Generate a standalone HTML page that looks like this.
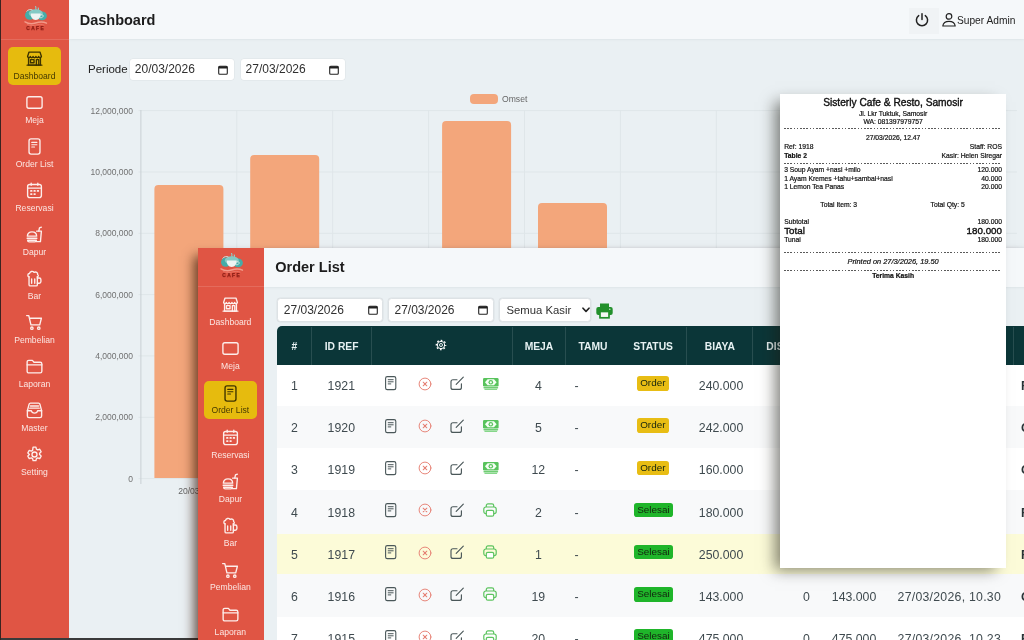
<!DOCTYPE html><html><head><meta charset="utf-8"><title>Sisterly Cafe</title><style>
*{box-sizing:border-box}
html,body{margin:0;padding:0}
#root{position:absolute;left:0;top:0;width:1024px;height:640px;overflow:hidden;will-change:transform}
body{width:1024px;height:640px;overflow:hidden;position:relative;background:#eaf0f3;font-family:"Liberation Sans",sans-serif;color:#222}
.win{position:absolute;background:#eaf0f3;z-index:0}
#w2{z-index:1}
.sb{position:absolute;left:0;top:0;bottom:0;width:68px;background:#e05544;color:#fdeeeb;z-index:2}
.logo{position:absolute;left:0;top:0;height:39.500px;border-bottom:1px solid rgba(255,255,255,.13)}
.it{position:absolute;left:8px;width:53px;height:38px;border-radius:5px;text-align:center;font-size:8.600px;line-height:10px}
.it svg{display:block;margin:2.100px auto 2.900px}
.it span{display:block;white-space:nowrap;opacity:.95}
.it.act{background:#e6bb0e;color:#3d3300}
.hd{position:absolute;left:68.700px;right:0;top:0;height:39.300px;background:#f5f8fa;box-shadow:0 0 2.500px rgba(120,140,150,.2)}
.hd h1{position:absolute;left:11px;top:0;margin:0;font-size:14.500px;line-height:40px;font-weight:bold;color:#1c1c1c}
.inp{position:absolute;height:22px;background:#fff;border-radius:3px;font-size:12px;line-height:22px;padding-left:5px;color:#303030;box-shadow:0 0 0 .5px rgba(0,0,0,.06)}

.inp.f{top:50.700px;height:23.200px;line-height:22.400px;border:1px solid #dde2e5;border-radius:3.500px;padding-left:5.500px}
#w2 .hd{left:66.200px;height:38.800px}
#w2 .hd h1{top:-1px}
.th{position:absolute;z-index:2;top:79px;height:38px;line-height:40px;color:#e6f1f2;font-size:10.300px;font-weight:bold;text-align:center;border-left:1px solid rgba(255,255,255,.12)}
.th:first-of-type{border-left:none}
.tr{position:absolute;left:79px;width:760px;height:42.200px;font-size:12.300px;color:#3f4a4f}
.tr span{position:absolute;top:1.400px;line-height:42.200px;text-align:center}
.tr i{position:absolute;top:13px;display:block;line-height:0}
.tr b{position:absolute;top:12.500px;font-weight:normal;font-size:9.900px;line-height:14.500px;height:14.500px;padding:0 3.300px;border-radius:2.800px;color:#14240f}

#rc{z-index:2;position:absolute;left:780px;top:93.700px;width:225.800px;height:474.500px;background:#fff;box-shadow:-8px 5px 14px -3px rgba(30,30,20,.55);color:#111;font-size:6.750px}
#rc .l{position:absolute;left:4.200px;right:3.800px;text-align:center;line-height:12px;white-space:nowrap;-webkit-text-stroke:.2px #111}
#rc .ttl{font-size:10.200px;-webkit-text-stroke:.38px #111}
#rc .big{font-size:9.800px;-webkit-text-stroke:.38px #111}
#rc .dash{position:absolute;left:4.200px;right:3.800px;height:.8px;background:repeating-linear-gradient(90deg,#5a5a5a 0,#5a5a5a 1.700px,transparent 1.700px,transparent 3.200px)}
</style></head><body><div id="root"><div class="win" style="left:0;top:0;width:1024px;height:640px"><svg style="position:absolute;left:0;top:0" width="1024" height="640" viewBox="0 0 1024 640"><path d="M138.500 478.6H1017" stroke="#dfe6e9" stroke-width="1"/><path d="M138.500 417.3H1017" stroke="#dfe6e9" stroke-width="1"/><path d="M138.500 355.9H1017" stroke="#dfe6e9" stroke-width="1"/><path d="M138.500 294.6H1017" stroke="#dfe6e9" stroke-width="1"/><path d="M138.500 233.3H1017" stroke="#dfe6e9" stroke-width="1"/><path d="M138.500 172.0H1017" stroke="#dfe6e9" stroke-width="1"/><path d="M138.500 110.6H1017" stroke="#dfe6e9" stroke-width="1"/><path d="M140.9 110V484" stroke="#c9d0d4" stroke-width="1"/><path d="M236.8 110V484" stroke="#dfe6e9" stroke-width="1"/><path d="M332.7 110V484" stroke="#dfe6e9" stroke-width="1"/><path d="M428.6 110V484" stroke="#dfe6e9" stroke-width="1"/><path d="M524.5 110V484" stroke="#dfe6e9" stroke-width="1"/><path d="M620.4 110V484" stroke="#dfe6e9" stroke-width="1"/><path d="M716.3 110V484" stroke="#dfe6e9" stroke-width="1"/><path d="M812.2 110V484" stroke="#dfe6e9" stroke-width="1"/><path d="M908.1 110V484" stroke="#dfe6e9" stroke-width="1"/><path d="M1004.0 110V484" stroke="#dfe6e9" stroke-width="1"/><text x="133" y="481.7" text-anchor="end" font-size="8.500" fill="#707070">0</text><text x="133" y="420.4" text-anchor="end" font-size="8.500" fill="#707070">2,000,000</text><text x="133" y="359.0" text-anchor="end" font-size="8.500" fill="#707070">4,000,000</text><text x="133" y="297.7" text-anchor="end" font-size="8.500" fill="#707070">6,000,000</text><text x="133" y="236.4" text-anchor="end" font-size="8.500" fill="#707070">8,000,000</text><text x="133" y="175.1" text-anchor="end" font-size="8.500" fill="#707070">10,000,000</text><text x="133" y="113.7" text-anchor="end" font-size="8.500" fill="#707070">12,000,000</text><path d="M154.4 478V189q0-4 4-4H219.4q4 0 4 4V478z" fill="#f3a67b"/><path d="M250.2 478V159q0-4 4-4H315.2q4 0 4 4V478z" fill="#f3a67b"/><path d="M346.2 478V304q0-4 4-4H411.2q4 0 4 4V478z" fill="#f3a67b"/><path d="M442.1 478V125q0-4 4-4H507.1q4 0 4 4V478z" fill="#f3a67b"/><path d="M538.0 478V207q0-4 4-4H603.0q4 0 4 4V478z" fill="#f3a67b"/><text x="188.9" y="494" text-anchor="middle" font-size="8.600" fill="#666">20/03</text><text x="284.8" y="494" text-anchor="middle" font-size="8.600" fill="#666">21/03</text><text x="380.7" y="494" text-anchor="middle" font-size="8.600" fill="#666">22/03</text><text x="476.6" y="494" text-anchor="middle" font-size="8.600" fill="#666">23/03</text><text x="572.5" y="494" text-anchor="middle" font-size="8.600" fill="#666">24/03</text><text x="668.4" y="494" text-anchor="middle" font-size="8.600" fill="#666">25/03</text><text x="764.3" y="494" text-anchor="middle" font-size="8.600" fill="#666">26/03</text><text x="860.2" y="494" text-anchor="middle" font-size="8.600" fill="#666">27/03</text><rect x="470" y="94" width="28" height="10" rx="4" fill="#f3a67b"/><text x="502" y="102" font-size="8.600" fill="#666">Omset</text></svg><div class="sb" style="width:68.7px"><div class="logo" style="width:68.7px"><div style="position:absolute;left:14px;top:2px;line-height:0"><svg width="40" height="40" viewBox="0 0 40 40"><path d="M21.500 4.500c1.200 1-.5 2.200.8 3.600M24.200 6c.8.800-.3 1.600.5 2.600" stroke="#8fcfca" stroke-width="1.100" fill="none" stroke-linecap="round"/><ellipse cx="15.800" cy="13.200" rx="4.800" ry="4.600" fill="#45aca8"/><ellipse cx="28" cy="13.800" rx="4.900" ry="4.400" fill="#45aca8"/><ellipse cx="21.800" cy="11.400" rx="7" ry="4.200" fill="#84cac5"/><path d="M16.800 11.600h9.800c.3 3.600-1.600 6.400-4.900 6.400s-5.200-2.800-4.900-6.400z" fill="#eef4f3"/><path d="M26.600 12.800c2-.6 3 .6 2.400 1.800c-.5 1-1.800 1.300-3 1.100" stroke="#d8ebe9" stroke-width=".9" fill="none"/><path d="M12.500 9.500c1.500-2 4-2.500 6-1.500" stroke="#cfe9e6" stroke-width=".9" fill="none"/><path d="M11 19.800c3.500 2.200 7 2.400 10.500 1.200c3.500-1.200 7.500-1.600 11 .2" stroke="#f29a8a" stroke-width="1.400" fill="none" stroke-linecap="round"/><path d="M13.500 22.600c3 1.300 6 1.200 8.500.4c2.600-.8 5.500-1 8 .1" stroke="#ea7464" stroke-width="1" fill="none" stroke-linecap="round"/><text x="21.700" y="28.400" text-anchor="middle" font-family="Liberation Sans, sans-serif" font-size="4.800" font-weight="bold" fill="#8a1c14" stroke="#8a1c14" stroke-width=".25" letter-spacing="1.400">CAFE</text></svg></div></div><div class="it act" style="left:8px;top:46.8px"><svg width="19" height="19" viewBox="0 0 16 16" fill="none" stroke="currentColor" stroke-width="1.15" stroke-linecap="round" stroke-linejoin="round" ><path d="M2.2 6.2 L3.4 2.6 H12.6 L13.8 6.2"/><path d="M2.2 6.2c0 1.6 2.3 1.6 2.3 0c0 1.6 2.3 1.6 2.3 0c0 1.6 2.4 1.6 2.4 0c0 1.6 2.3 1.6 2.3 0c0 1.6 2.3 1.6 2.3 0"/><path d="M3 7.6V13.6H13V7.6"/><path d="M1.8 13.6H14.2"/><rect x="4.6" y="9" width="3" height="2.6"/><path d="M9.6 13.6V9H11.6V13.6"/></svg><span>Dashboard</span></div><div class="it" style="left:8px;top:90.8px"><svg width="19" height="19" viewBox="0 0 16 16" fill="none" stroke="currentColor" stroke-width="1.15" stroke-linecap="round" stroke-linejoin="round" ><rect x="1.6" y="3.2" width="12.8" height="9.6" rx="1.6"/></svg><span>Meja</span></div><div class="it" style="left:8px;top:134.9px"><svg width="19" height="19" viewBox="0 0 16 16" fill="none" stroke="currentColor" stroke-width="1.15" stroke-linecap="round" stroke-linejoin="round" ><rect x="3.4" y="1.6" width="9.2" height="12.8" rx="1.7"/><path d="M5.7 4.6H10M5.7 6.5H10M5.7 8.4H8" stroke-width="1"/></svg><span>Order List</span></div><div class="it" style="left:8px;top:178.9px"><svg width="19" height="19" viewBox="0 0 16 16" fill="none" stroke="currentColor" stroke-width="1.15" stroke-linecap="round" stroke-linejoin="round" ><rect x="2.2" y="2.9" width="11.6" height="11.1" rx="1.8"/><path d="M2.2 6H13.8M5.2 1.8V3.6M10.8 1.8V3.6"/><path d="M5 8.4H5.6M7.8 8.4H8.4M10.6 8.4H11.2M5 11H5.6M7.8 11H8.4" stroke-width="1.5"/></svg><span>Reservasi</span></div><div class="it" style="left:8px;top:223.0px"><svg width="19" height="19" viewBox="0 0 16 16" fill="none" stroke="currentColor" stroke-width="1.15" stroke-linecap="round" stroke-linejoin="round" ><path d="M9.8 5.2H13.8L13 14H9.6"/><path d="M11.6 5.2L12.2 2.4L13.8 1.8"/><path d="M2 9.4c0-2.4 1.6-3.6 3.9-3.6s3.9 1.2 3.9 3.6z"/><path d="M1.8 11.2H10"/><path d="M2.2 12.8H9.6c0 1-.6 1.4-1.4 1.4H3.6c-.8 0-1.4-.4-1.4-1.4z"/></svg><span>Dapur</span></div><div class="it" style="left:8px;top:267.0px"><svg width="19" height="19" viewBox="0 0 16 16" fill="none" stroke="currentColor" stroke-width="1.15" stroke-linecap="round" stroke-linejoin="round" ><path d="M3.4 6.4V13.2c0 .6.4 1 1 1H9.4c.6 0 1-.4 1-1V6.4"/><path d="M10.4 7.6H12c.8 0 1.4.6 1.4 1.4V10.6c0 .8-.6 1.4-1.4 1.4H10.4"/><path d="M3.4 6.6C2 6.2 2 3.8 3.8 3.8C4 2 6.6 1.4 7.6 2.8C9.2 2 11 3 10.6 4.6C11.6 5.2 11.2 6.6 10.4 6.6"/><path d="M5.6 8.4V12M8.2 8.4V12"/></svg><span>Bar</span></div><div class="it" style="left:8px;top:311.0px"><svg width="19" height="19" viewBox="0 0 16 16" fill="none" stroke="currentColor" stroke-width="1.15" stroke-linecap="round" stroke-linejoin="round" ><path d="M1.4 2.2H3.2L5 10H12.4L13.8 4.4H4"/><circle cx="5.8" cy="12.8" r="1"/><circle cx="11.6" cy="12.8" r="1"/></svg><span>Pembelian</span></div><div class="it" style="left:8px;top:355.1px"><svg width="19" height="19" viewBox="0 0 16 16" fill="none" stroke="currentColor" stroke-width="1.15" stroke-linecap="round" stroke-linejoin="round" ><path d="M1.8 4.2c0-.8.6-1.4 1.4-1.4H6.2L7.6 4.4H12.8c.8 0 1.4.6 1.4 1.4V12c0 .8-.6 1.4-1.4 1.4H3.2c-.8 0-1.4-.6-1.4-1.4z"/><path d="M1.8 6.6H14.2"/></svg><span>Laporan</span></div><div class="it" style="left:8px;top:399.1px"><svg width="19" height="19" viewBox="0 0 16 16" fill="none" stroke="currentColor" stroke-width="1.15" stroke-linecap="round" stroke-linejoin="round" ><path d="M2 8.2L3.4 2.8c.2-.6.6-1 1.2-1H11.400c.6 0 1 .4 1.200 1L14 8.200V12.600c0 .8-.6 1.400-1.400 1.400H3.400C2.600 14 2 13.400 2 12.600z"/><path d="M2 8.200H5.400c.2 1.200 1.200 2 2.600 2s2.400-.8 2.600-2H14"/><path d="M4.600 4.200H11.400M4 6H12"/></svg><span>Master</span></div><div class="it" style="left:8px;top:443.2px"><svg width="19" height="19" viewBox="0 0 16 16" fill="none" stroke="currentColor" stroke-width="1.15" stroke-linecap="round" stroke-linejoin="round" ><circle cx="8" cy="8" r="2.1"/><path d="M6.800 1.800h2.400l.4 1.700 1.100.6 1.700-.5 1.200 2.100-1.300 1.200v1.200l1.300 1.200-1.200 2.100-1.700-.5-1.100.6-.4 1.700H6.800l-.4-1.700-1.100-.6-1.700.5-1.200-2.100 1.300-1.200V7.900L2.400 6.700l1.200-2.100 1.700.5 1.100-.6z"/></svg><span>Setting</span></div></div><div class="hd"><h1>Dashboard</h1><div style="position:absolute;left:840.600px;top:8px;width:29.400px;height:25.500px;background:#f0f3f5"></div><svg style="position:absolute;left:845px;top:12px" width="16" height="16" viewBox="0 0 16 16" fill="none" stroke="#222" stroke-width="1.500" stroke-linecap="round"><path d="M8 1.800V7.600"/><path d="M4.700 3.600a5.600 5.600 0 1 0 6.600 0"/></svg><svg style="position:absolute;left:872px;top:12px" width="16" height="16" viewBox="0 0 16 16" fill="none" stroke="#222" stroke-width="1.200" stroke-linecap="round" stroke-linejoin="round"><circle cx="8" cy="4.400" r="2.800"/><path d="M1.800 14c.4-3 2.800-4.600 6.200-4.600s5.800 1.600 6.200 4.600z"/></svg><div style="position:absolute;left:888.300px;top:.8px;line-height:40px;font-size:10.200px;color:#222">Super Admin</div></div><div style="position:absolute;left:88px;top:58px;line-height:22px;font-size:11.500px;color:#222">Periode</div><div class="inp" style="left:129.800px;top:58.700px;width:104.500px;height:21.500px;line-height:21.500px">20/03/2026<svg style="position:absolute;left:88px;top:6px" width="10" height="10" viewBox="0 0 10 10"><rect x=".7" y="1.300" width="8.600" height="8" rx="1" fill="none" stroke="#222" stroke-width="1.100"/><rect x=".7" y="1.300" width="8.600" height="2.200" fill="#222"/></svg></div><div class="inp" style="left:240.600px;top:58.700px;width:104.200px;height:21.500px;line-height:21.500px">27/03/2026<svg style="position:absolute;left:88px;top:6px" width="10" height="10" viewBox="0 0 10 10"><rect x=".7" y="1.300" width="8.600" height="8" rx="1" fill="none" stroke="#222" stroke-width="1.100"/><rect x=".7" y="1.300" width="8.600" height="2.200" fill="#222"/></svg></div></div><div class="win" id="w2" style="left:198.300px;top:247.800px;width:830px;height:400px;box-shadow:-5px 7px 11px -1px rgba(50,20,5,.72)"><div class="sb" style="width:66.2px"><div class="logo" style="width:66.2px"><div style="position:absolute;left:11.6px;top:1.4px;line-height:0"><svg width="40" height="40" viewBox="0 0 40 40"><path d="M21.500 4.500c1.200 1-.5 2.200.8 3.600M24.200 6c.8.800-.3 1.600.5 2.600" stroke="#8fcfca" stroke-width="1.100" fill="none" stroke-linecap="round"/><ellipse cx="15.800" cy="13.200" rx="4.800" ry="4.600" fill="#45aca8"/><ellipse cx="28" cy="13.800" rx="4.900" ry="4.400" fill="#45aca8"/><ellipse cx="21.800" cy="11.400" rx="7" ry="4.200" fill="#84cac5"/><path d="M16.800 11.600h9.800c.3 3.600-1.600 6.400-4.900 6.400s-5.200-2.800-4.900-6.400z" fill="#eef4f3"/><path d="M26.600 12.800c2-.6 3 .6 2.400 1.800c-.5 1-1.800 1.300-3 1.100" stroke="#d8ebe9" stroke-width=".9" fill="none"/><path d="M12.500 9.500c1.500-2 4-2.500 6-1.500" stroke="#cfe9e6" stroke-width=".9" fill="none"/><path d="M11 19.800c3.500 2.200 7 2.400 10.500 1.200c3.500-1.200 7.500-1.600 11 .2" stroke="#f29a8a" stroke-width="1.400" fill="none" stroke-linecap="round"/><path d="M13.500 22.600c3 1.300 6 1.200 8.500.4c2.600-.8 5.500-1 8 .1" stroke="#ea7464" stroke-width="1" fill="none" stroke-linecap="round"/><text x="21.700" y="28.400" text-anchor="middle" font-family="Liberation Sans, sans-serif" font-size="4.800" font-weight="bold" fill="#8a1c14" stroke="#8a1c14" stroke-width=".25" letter-spacing="1.400">CAFE</text></svg></div></div><div class="it" style="left:5.6px;top:45.2px"><svg width="19" height="19" viewBox="0 0 16 16" fill="none" stroke="currentColor" stroke-width="1.15" stroke-linecap="round" stroke-linejoin="round" ><path d="M2.2 6.2 L3.4 2.6 H12.6 L13.8 6.2"/><path d="M2.2 6.2c0 1.6 2.3 1.6 2.3 0c0 1.6 2.3 1.6 2.3 0c0 1.6 2.4 1.6 2.4 0c0 1.6 2.3 1.6 2.3 0c0 1.6 2.3 1.6 2.3 0"/><path d="M3 7.6V13.6H13V7.6"/><path d="M1.8 13.6H14.2"/><rect x="4.6" y="9" width="3" height="2.6"/><path d="M9.6 13.6V9H11.6V13.6"/></svg><span>Dashboard</span></div><div class="it" style="left:5.6px;top:89.5px"><svg width="19" height="19" viewBox="0 0 16 16" fill="none" stroke="currentColor" stroke-width="1.15" stroke-linecap="round" stroke-linejoin="round" ><rect x="1.6" y="3.2" width="12.8" height="9.6" rx="1.6"/></svg><span>Meja</span></div><div class="it act" style="left:5.6px;top:133.7px"><svg width="19" height="19" viewBox="0 0 16 16" fill="none" stroke="currentColor" stroke-width="1.15" stroke-linecap="round" stroke-linejoin="round" ><rect x="3.4" y="1.6" width="9.2" height="12.8" rx="1.7"/><path d="M5.7 4.6H10M5.7 6.5H10M5.7 8.4H8" stroke-width="1"/></svg><span>Order List</span></div><div class="it" style="left:5.6px;top:177.9px"><svg width="19" height="19" viewBox="0 0 16 16" fill="none" stroke="currentColor" stroke-width="1.15" stroke-linecap="round" stroke-linejoin="round" ><rect x="2.2" y="2.9" width="11.6" height="11.1" rx="1.8"/><path d="M2.2 6H13.8M5.2 1.8V3.6M10.8 1.8V3.6"/><path d="M5 8.4H5.6M7.8 8.4H8.4M10.6 8.4H11.2M5 11H5.6M7.8 11H8.4" stroke-width="1.5"/></svg><span>Reservasi</span></div><div class="it" style="left:5.6px;top:222.2px"><svg width="19" height="19" viewBox="0 0 16 16" fill="none" stroke="currentColor" stroke-width="1.15" stroke-linecap="round" stroke-linejoin="round" ><path d="M9.8 5.2H13.8L13 14H9.6"/><path d="M11.6 5.2L12.2 2.4L13.8 1.8"/><path d="M2 9.4c0-2.4 1.6-3.6 3.9-3.6s3.9 1.2 3.9 3.6z"/><path d="M1.8 11.2H10"/><path d="M2.2 12.8H9.6c0 1-.6 1.4-1.4 1.4H3.6c-.8 0-1.4-.4-1.4-1.4z"/></svg><span>Dapur</span></div><div class="it" style="left:5.6px;top:266.4px"><svg width="19" height="19" viewBox="0 0 16 16" fill="none" stroke="currentColor" stroke-width="1.15" stroke-linecap="round" stroke-linejoin="round" ><path d="M3.4 6.4V13.2c0 .6.4 1 1 1H9.4c.6 0 1-.4 1-1V6.4"/><path d="M10.4 7.6H12c.8 0 1.4.6 1.4 1.4V10.6c0 .8-.6 1.4-1.4 1.4H10.4"/><path d="M3.4 6.6C2 6.2 2 3.8 3.8 3.8C4 2 6.6 1.4 7.6 2.8C9.2 2 11 3 10.6 4.6C11.6 5.2 11.2 6.6 10.4 6.6"/><path d="M5.6 8.4V12M8.2 8.4V12"/></svg><span>Bar</span></div><div class="it" style="left:5.6px;top:310.7px"><svg width="19" height="19" viewBox="0 0 16 16" fill="none" stroke="currentColor" stroke-width="1.15" stroke-linecap="round" stroke-linejoin="round" ><path d="M1.4 2.2H3.2L5 10H12.4L13.8 4.4H4"/><circle cx="5.8" cy="12.8" r="1"/><circle cx="11.6" cy="12.8" r="1"/></svg><span>Pembelian</span></div><div class="it" style="left:5.6px;top:354.9px"><svg width="19" height="19" viewBox="0 0 16 16" fill="none" stroke="currentColor" stroke-width="1.15" stroke-linecap="round" stroke-linejoin="round" ><path d="M1.8 4.2c0-.8.6-1.4 1.4-1.4H6.2L7.6 4.4H12.8c.8 0 1.4.6 1.4 1.4V12c0 .8-.6 1.4-1.4 1.4H3.2c-.8 0-1.4-.6-1.4-1.4z"/><path d="M1.8 6.6H14.2"/></svg><span>Laporan</span></div><div class="it" style="left:5.6px;top:399.2px"><svg width="19" height="19" viewBox="0 0 16 16" fill="none" stroke="currentColor" stroke-width="1.15" stroke-linecap="round" stroke-linejoin="round" ><path d="M2 8.2L3.4 2.8c.2-.6.6-1 1.2-1H11.400c.6 0 1 .4 1.200 1L14 8.200V12.600c0 .8-.6 1.400-1.400 1.400H3.400C2.600 14 2 13.400 2 12.600z"/><path d="M2 8.200H5.400c.2 1.200 1.200 2 2.600 2s2.400-.8 2.600-2H14"/><path d="M4.600 4.200H11.400M4 6H12"/></svg><span>Master</span></div><div class="it" style="left:5.6px;top:443.4px"><svg width="19" height="19" viewBox="0 0 16 16" fill="none" stroke="currentColor" stroke-width="1.15" stroke-linecap="round" stroke-linejoin="round" ><circle cx="8" cy="8" r="2.1"/><path d="M6.800 1.800h2.400l.4 1.700 1.100.6 1.700-.5 1.200 2.100-1.300 1.200v1.200l1.300 1.200-1.200 2.100-1.700-.5-1.100.6-.4 1.700H6.800l-.4-1.700-1.100-.6-1.700.5-1.200-2.100 1.300-1.200V7.900L2.400 6.700l1.200-2.100 1.700.5 1.100-.6z"/></svg><span>Setting</span></div></div><div class="hd"><h1 style="left:10.800px">Order List</h1></div><div class="inp f" style="left:79px;width:106.200px">27/03/2026<svg style="position:absolute;left:89.5px;top:5.3px" width="10" height="10" viewBox="0 0 10 10"><rect x=".7" y="1.300" width="8.600" height="8" rx="1" fill="none" stroke="#222" stroke-width="1.100"/><rect x=".7" y="1.300" width="8.600" height="2.200" fill="#222"/></svg></div><div class="inp f" style="left:189.700px;width:106.200px">27/03/2026<svg style="position:absolute;left:89.5px;top:5.3px" width="10" height="10" viewBox="0 0 10 10"><rect x=".7" y="1.300" width="8.600" height="8" rx="1" fill="none" stroke="#222" stroke-width="1.100"/><rect x=".7" y="1.300" width="8.600" height="2.200" fill="#222"/></svg></div><div class="inp f" style="left:300.700px;width:92.300px;padding-left:6.500px;font-size:11.300px">Semua Kasir<svg style="position:absolute;left:82.500px;top:8px" width="8" height="6" viewBox="0 0 8 6" fill="none" stroke="#222" stroke-width="1.600" stroke-linecap="round" stroke-linejoin="round"><path d="M1 1.200L4 4.400L7 1.200"/></svg></div><svg style="position:absolute;left:397.600px;top:55.600px" width="17" height="16" viewBox="0 0 17 16"><path d="M4 .5h9v4H4z" fill="#22902b"/><rect x=".3" y="4" width="16.400" height="8" rx="2" fill="#22902b"/><rect x="4" y="8.500" width="9" height="6.300" fill="#f4f8f4" stroke="#22902b" stroke-width="1.700"/><circle cx="13.800" cy="6.300" r=".7" fill="#d8f0d8"/></svg><div style="position:absolute;left:79px;top:78.500px;width:760px;height:38.300px;background:#0b3638;border-radius:5px 0 0 0;z-index:1"></div><div class="th" style="left:79px;width:34px;border-left:none">#</div><div class="th" style="left:113px;width:59.7px">ID REF</div><div class="th" style="left:172.7px;width:140.7px"></div><div class="th" style="left:313.4px;width:53.6px">MEJA</div><div class="th" style="left:367px;width:54.5px">TAMU</div><div class="th" style="left:421.5px;width:66.7px;border-left:none">STATUS</div><div class="th" style="left:488.2px;width:65.8px">BIAYA</div><div class="th" style="left:554px;width:67.2px">DISKON</div><div class="th" style="left:621.2px;width:66.5px">TOTAL</div><div class="th" style="left:687.7px;width:127px">WAKTU</div><div class="th" style="left:814.7px;width:60px">KASIR</div><svg style="position:absolute;z-index:3;left:236.600px;top:91.300px" width="12" height="12" viewBox="0 0 12 12" fill="none" stroke="#fff"><circle cx="6" cy="6" r="3.700" stroke-width="1"/><circle cx="6" cy="6" r="4.700" stroke-width="1.300" stroke-dasharray="1.700 1.990" stroke-dashoffset=".85"/><circle cx="6" cy="6" r="1.500" stroke-width=".9"/></svg><div class="tr" style="top:115.9px;background:#fff"><span style="left:0;width:34px">1</span><span style="left:34px;width:60px">1921</span><i style="left:108px;top:12.800px"><svg width="12" height="15" viewBox="0 0 12 15" fill="none" stroke="#4a5759" stroke-width="1.1" stroke-linecap="round"><rect x=".6" y=".6" width="10.2" height="13" rx="1.7"/><path d="M3.200 3.700H8.200M3.200 5.800H8.200M3.200 7.900H5.800" stroke-width="1"/></svg></i><i style="left:140.400px;top:13.100px"><svg width="14" height="14" viewBox="0 0 14 14" fill="none" stroke="#e67f73" stroke-width=".95" stroke-linecap="round"><circle cx="7" cy="7" r="5.900"/><path d="M5.200 5.200L8.800 8.800M8.800 5.200L5.200 8.800" stroke-width="1.050"/></svg></i><i style="left:173.200px;top:12.700px"><svg width="14.500" height="14.500" viewBox="0 0 14.500 14.500" fill="none" stroke="#4a5759" stroke-width="1.150" stroke-linecap="round" stroke-linejoin="round"><path d="M7 3.700H3c-1.100 0-2 .9-2 2V11.400c0 1.100.9 2 2 2H9.400c1.100 0 2-.9 2-2V7.800"/><path d="M6.200 8.400L13.300 1.200"/></svg></i><i style="left:205.600px;top:13.900px"><svg width="16" height="12.500" viewBox="0 0 16 12.500"><rect x="0" y="0" width="15.600" height="8.600" rx="1.300" fill="#58c35c"/><path d="M2 4.300L4.600 1.300H11L13.600 4.300L11 7.300H4.600z" fill="#f4fff4"/><circle cx="7.800" cy="4.300" r="2.300" fill="#58c35c"/><circle cx="7.800" cy="4.300" r="1.150" fill="#f4fff4"/><rect x=".4" y="9.100" width="14.800" height="1.300" rx=".6" fill="#6fcd73"/><rect x="1.400" y="10.800" width="12.800" height="1.300" rx=".6" fill="#86d78a"/></svg></i><span style="left:234px;width:54px">4</span><span style="left:297.300px;width:10px;text-align:left">-</span><b style="left:359.6px;background:#e8bd14">Order</b><span style="right:294px">240.000</span><span style="right:227.500px">0</span><span style="right:161px">240.000</span><span style="left:608.500px;width:127px;white-space:nowrap;letter-spacing:.25px">27/03/2026, 12.58</span><span style="left:743.800px;width:20px;text-align:left;font-weight:bold;color:#2a3336">R</span></div><div class="tr" style="top:158.1px;background:#f8f9fa"><span style="left:0;width:34px">2</span><span style="left:34px;width:60px">1920</span><i style="left:108px;top:12.800px"><svg width="12" height="15" viewBox="0 0 12 15" fill="none" stroke="#4a5759" stroke-width="1.1" stroke-linecap="round"><rect x=".6" y=".6" width="10.2" height="13" rx="1.7"/><path d="M3.200 3.700H8.200M3.200 5.800H8.200M3.200 7.900H5.800" stroke-width="1"/></svg></i><i style="left:140.400px;top:13.100px"><svg width="14" height="14" viewBox="0 0 14 14" fill="none" stroke="#e67f73" stroke-width=".95" stroke-linecap="round"><circle cx="7" cy="7" r="5.900"/><path d="M5.200 5.200L8.800 8.800M8.800 5.200L5.200 8.800" stroke-width="1.050"/></svg></i><i style="left:173.200px;top:12.700px"><svg width="14.500" height="14.500" viewBox="0 0 14.500 14.500" fill="none" stroke="#4a5759" stroke-width="1.150" stroke-linecap="round" stroke-linejoin="round"><path d="M7 3.700H3c-1.100 0-2 .9-2 2V11.400c0 1.100.9 2 2 2H9.400c1.100 0 2-.9 2-2V7.800"/><path d="M6.200 8.400L13.300 1.200"/></svg></i><i style="left:205.600px;top:13.900px"><svg width="16" height="12.500" viewBox="0 0 16 12.500"><rect x="0" y="0" width="15.600" height="8.600" rx="1.300" fill="#58c35c"/><path d="M2 4.300L4.600 1.300H11L13.600 4.300L11 7.300H4.600z" fill="#f4fff4"/><circle cx="7.800" cy="4.300" r="2.300" fill="#58c35c"/><circle cx="7.800" cy="4.300" r="1.150" fill="#f4fff4"/><rect x=".4" y="9.100" width="14.800" height="1.300" rx=".6" fill="#6fcd73"/><rect x="1.400" y="10.800" width="12.800" height="1.300" rx=".6" fill="#86d78a"/></svg></i><span style="left:234px;width:54px">5</span><span style="left:297.300px;width:10px;text-align:left">-</span><b style="left:359.6px;background:#e8bd14">Order</b><span style="right:294px">242.000</span><span style="right:227.500px">0</span><span style="right:161px">242.000</span><span style="left:608.500px;width:127px;white-space:nowrap;letter-spacing:.25px">27/03/2026, 12.55</span><span style="left:743.800px;width:20px;text-align:left;font-weight:bold;color:#2a3336">G</span></div><div class="tr" style="top:200.3px;background:#fff"><span style="left:0;width:34px">3</span><span style="left:34px;width:60px">1919</span><i style="left:108px;top:12.800px"><svg width="12" height="15" viewBox="0 0 12 15" fill="none" stroke="#4a5759" stroke-width="1.1" stroke-linecap="round"><rect x=".6" y=".6" width="10.2" height="13" rx="1.7"/><path d="M3.200 3.700H8.200M3.200 5.800H8.200M3.200 7.900H5.800" stroke-width="1"/></svg></i><i style="left:140.400px;top:13.100px"><svg width="14" height="14" viewBox="0 0 14 14" fill="none" stroke="#e67f73" stroke-width=".95" stroke-linecap="round"><circle cx="7" cy="7" r="5.900"/><path d="M5.200 5.200L8.800 8.800M8.800 5.200L5.200 8.800" stroke-width="1.050"/></svg></i><i style="left:173.200px;top:12.700px"><svg width="14.500" height="14.500" viewBox="0 0 14.500 14.500" fill="none" stroke="#4a5759" stroke-width="1.150" stroke-linecap="round" stroke-linejoin="round"><path d="M7 3.700H3c-1.100 0-2 .9-2 2V11.400c0 1.100.9 2 2 2H9.400c1.100 0 2-.9 2-2V7.800"/><path d="M6.200 8.400L13.300 1.200"/></svg></i><i style="left:205.600px;top:13.900px"><svg width="16" height="12.500" viewBox="0 0 16 12.500"><rect x="0" y="0" width="15.600" height="8.600" rx="1.300" fill="#58c35c"/><path d="M2 4.300L4.600 1.300H11L13.600 4.300L11 7.300H4.600z" fill="#f4fff4"/><circle cx="7.800" cy="4.300" r="2.300" fill="#58c35c"/><circle cx="7.800" cy="4.300" r="1.150" fill="#f4fff4"/><rect x=".4" y="9.100" width="14.800" height="1.300" rx=".6" fill="#6fcd73"/><rect x="1.400" y="10.800" width="12.800" height="1.300" rx=".6" fill="#86d78a"/></svg></i><span style="left:234px;width:54px">12</span><span style="left:297.300px;width:10px;text-align:left">-</span><b style="left:359.6px;background:#e8bd14">Order</b><span style="right:294px">160.000</span><span style="right:227.500px">0</span><span style="right:161px">160.000</span><span style="left:608.500px;width:127px;white-space:nowrap;letter-spacing:.25px">27/03/2026, 12.51</span><span style="left:743.800px;width:20px;text-align:left;font-weight:bold;color:#2a3336">G</span></div><div class="tr" style="top:242.5px;background:#f8f9fa"><span style="left:0;width:34px">4</span><span style="left:34px;width:60px">1918</span><i style="left:108px;top:12.800px"><svg width="12" height="15" viewBox="0 0 12 15" fill="none" stroke="#4a5759" stroke-width="1.1" stroke-linecap="round"><rect x=".6" y=".6" width="10.2" height="13" rx="1.7"/><path d="M3.200 3.700H8.200M3.200 5.800H8.200M3.200 7.900H5.800" stroke-width="1"/></svg></i><i style="left:140.400px;top:13.100px"><svg width="14" height="14" viewBox="0 0 14 14" fill="none" stroke="#e67f73" stroke-width=".95" stroke-linecap="round"><circle cx="7" cy="7" r="5.900"/><path d="M5.200 5.200L8.800 8.800M8.800 5.200L5.200 8.800" stroke-width="1.050"/></svg></i><i style="left:173.200px;top:12.700px"><svg width="14.500" height="14.500" viewBox="0 0 14.500 14.500" fill="none" stroke="#4a5759" stroke-width="1.150" stroke-linecap="round" stroke-linejoin="round"><path d="M7 3.700H3c-1.100 0-2 .9-2 2V11.400c0 1.100.9 2 2 2H9.400c1.100 0 2-.9 2-2V7.800"/><path d="M6.200 8.400L13.300 1.200"/></svg></i><i style="left:206.200px;top:12.800px"><svg width="14" height="14" viewBox="0 0 14 14" fill="none" stroke="#5cc45f" stroke-width="1.200" stroke-linejoin="round"><path d="M3.300 4V2.500c0-.9.700-1.700 1.700-1.700h4c.9 0 1.700.7 1.700 1.700V4"/><rect x=".8" y="4" width="12.400" height="6.600" rx="2.100"/><rect x="3.300" y="7.300" width="7.400" height="5.900" rx="1.500" fill="#fff"/></svg></i><span style="left:234px;width:54px">2</span><span style="left:297.300px;width:10px;text-align:left">-</span><b style="left:356.6px;background:#1fb52a">Selesai</b><span style="right:294px">180.000</span><span style="right:227.500px">0</span><span style="right:161px">180.000</span><span style="left:608.500px;width:127px;white-space:nowrap;letter-spacing:.25px">27/03/2026, 12.47</span><span style="left:743.800px;width:20px;text-align:left;font-weight:bold;color:#2a3336">R</span></div><div class="tr" style="top:284.7px;background:linear-gradient(#f8f9fa 0,#f8f9fa 1.700px,#fcfbd8 1.700px,#fcfbd8 41.700px,#f8f9fa 41.700px)"><span style="left:0;width:34px">5</span><span style="left:34px;width:60px">1917</span><i style="left:108px;top:12.800px"><svg width="12" height="15" viewBox="0 0 12 15" fill="none" stroke="#4a5759" stroke-width="1.1" stroke-linecap="round"><rect x=".6" y=".6" width="10.2" height="13" rx="1.7"/><path d="M3.200 3.700H8.200M3.200 5.800H8.200M3.200 7.900H5.800" stroke-width="1"/></svg></i><i style="left:140.400px;top:13.100px"><svg width="14" height="14" viewBox="0 0 14 14" fill="none" stroke="#e67f73" stroke-width=".95" stroke-linecap="round"><circle cx="7" cy="7" r="5.900"/><path d="M5.200 5.200L8.800 8.800M8.800 5.200L5.200 8.800" stroke-width="1.050"/></svg></i><i style="left:173.200px;top:12.700px"><svg width="14.500" height="14.500" viewBox="0 0 14.500 14.500" fill="none" stroke="#4a5759" stroke-width="1.150" stroke-linecap="round" stroke-linejoin="round"><path d="M7 3.700H3c-1.100 0-2 .9-2 2V11.400c0 1.100.9 2 2 2H9.400c1.100 0 2-.9 2-2V7.800"/><path d="M6.200 8.400L13.300 1.200"/></svg></i><i style="left:206.200px;top:12.800px"><svg width="14" height="14" viewBox="0 0 14 14" fill="none" stroke="#5cc45f" stroke-width="1.200" stroke-linejoin="round"><path d="M3.300 4V2.500c0-.9.700-1.700 1.700-1.700h4c.9 0 1.700.7 1.700 1.700V4"/><rect x=".8" y="4" width="12.400" height="6.600" rx="2.100"/><rect x="3.300" y="7.300" width="7.400" height="5.900" rx="1.500" fill="#fff"/></svg></i><span style="left:234px;width:54px">1</span><span style="left:297.300px;width:10px;text-align:left">-</span><b style="left:356.6px;background:#1fb52a">Selesai</b><span style="right:294px">250.000</span><span style="right:227.500px">0</span><span style="right:161px">250.000</span><span style="left:608.500px;width:127px;white-space:nowrap;letter-spacing:.25px">27/03/2026, 11.02</span><span style="left:743.800px;width:20px;text-align:left;font-weight:bold;color:#2a3336">R</span></div><div class="tr" style="top:326.9px;background:#f8f9fa"><span style="left:0;width:34px">6</span><span style="left:34px;width:60px">1916</span><i style="left:108px;top:12.800px"><svg width="12" height="15" viewBox="0 0 12 15" fill="none" stroke="#4a5759" stroke-width="1.1" stroke-linecap="round"><rect x=".6" y=".6" width="10.2" height="13" rx="1.7"/><path d="M3.200 3.700H8.200M3.200 5.800H8.200M3.200 7.900H5.800" stroke-width="1"/></svg></i><i style="left:140.400px;top:13.100px"><svg width="14" height="14" viewBox="0 0 14 14" fill="none" stroke="#e67f73" stroke-width=".95" stroke-linecap="round"><circle cx="7" cy="7" r="5.900"/><path d="M5.200 5.200L8.800 8.800M8.800 5.200L5.200 8.800" stroke-width="1.050"/></svg></i><i style="left:173.200px;top:12.700px"><svg width="14.500" height="14.500" viewBox="0 0 14.500 14.500" fill="none" stroke="#4a5759" stroke-width="1.150" stroke-linecap="round" stroke-linejoin="round"><path d="M7 3.700H3c-1.100 0-2 .9-2 2V11.400c0 1.100.9 2 2 2H9.400c1.100 0 2-.9 2-2V7.800"/><path d="M6.200 8.400L13.300 1.200"/></svg></i><i style="left:206.200px;top:12.800px"><svg width="14" height="14" viewBox="0 0 14 14" fill="none" stroke="#5cc45f" stroke-width="1.200" stroke-linejoin="round"><path d="M3.300 4V2.500c0-.9.700-1.700 1.700-1.700h4c.9 0 1.700.7 1.700 1.700V4"/><rect x=".8" y="4" width="12.400" height="6.600" rx="2.100"/><rect x="3.300" y="7.300" width="7.400" height="5.900" rx="1.500" fill="#fff"/></svg></i><span style="left:234px;width:54px">19</span><span style="left:297.300px;width:10px;text-align:left">-</span><b style="left:356.6px;background:#1fb52a">Selesai</b><span style="right:294px">143.000</span><span style="right:227.500px">0</span><span style="right:161px">143.000</span><span style="left:608.500px;width:127px;white-space:nowrap;letter-spacing:.25px">27/03/2026, 10.30</span><span style="left:743.800px;width:20px;text-align:left;font-weight:bold;color:#2a3336">G</span></div><div class="tr" style="top:369.1px;background:#fff"><span style="left:0;width:34px">7</span><span style="left:34px;width:60px">1915</span><i style="left:108px;top:12.800px"><svg width="12" height="15" viewBox="0 0 12 15" fill="none" stroke="#4a5759" stroke-width="1.1" stroke-linecap="round"><rect x=".6" y=".6" width="10.2" height="13" rx="1.7"/><path d="M3.200 3.700H8.200M3.200 5.800H8.200M3.200 7.900H5.800" stroke-width="1"/></svg></i><i style="left:140.400px;top:13.100px"><svg width="14" height="14" viewBox="0 0 14 14" fill="none" stroke="#e67f73" stroke-width=".95" stroke-linecap="round"><circle cx="7" cy="7" r="5.900"/><path d="M5.200 5.200L8.800 8.800M8.800 5.200L5.200 8.800" stroke-width="1.050"/></svg></i><i style="left:173.200px;top:12.700px"><svg width="14.500" height="14.500" viewBox="0 0 14.500 14.500" fill="none" stroke="#4a5759" stroke-width="1.150" stroke-linecap="round" stroke-linejoin="round"><path d="M7 3.700H3c-1.100 0-2 .9-2 2V11.400c0 1.100.9 2 2 2H9.400c1.100 0 2-.9 2-2V7.800"/><path d="M6.200 8.400L13.300 1.200"/></svg></i><i style="left:206.200px;top:12.800px"><svg width="14" height="14" viewBox="0 0 14 14" fill="none" stroke="#5cc45f" stroke-width="1.200" stroke-linejoin="round"><path d="M3.300 4V2.500c0-.9.700-1.700 1.700-1.700h4c.9 0 1.700.7 1.700 1.700V4"/><rect x=".8" y="4" width="12.400" height="6.600" rx="2.100"/><rect x="3.300" y="7.300" width="7.400" height="5.900" rx="1.500" fill="#fff"/></svg></i><span style="left:234px;width:54px">20</span><span style="left:297.300px;width:10px;text-align:left">-</span><b style="left:356.6px;background:#1fb52a">Selesai</b><span style="right:294px">475.000</span><span style="right:227.500px">0</span><span style="right:161px">475.000</span><span style="left:608.500px;width:127px;white-space:nowrap;letter-spacing:.25px">27/03/2026, 10.23</span><span style="left:743.800px;width:20px;text-align:left;font-weight:bold;color:#2a3336">R</span></div></div><div id="rc"><div class="l ttl" style="top:3.1px;">Sisterly Cafe &amp; Resto, Samosir</div><div class="l " style="top:14.3px;">Jl. Lkr Tuktuk, Samosir</div><div class="l " style="top:22.6px;">WA: 081397979757</div><div class="dash" style="top:34.6px"></div><div class="l " style="top:38.7px;">27/03/2026, 12.47</div><div class="l " style="top:47.3px;text-align:left">Ref: 1918</div><div class="l " style="top:47.3px;text-align:right">Staff: ROS</div><div class="l " style="top:56.6px;text-align:left"><b>Table 2</b></div><div class="l " style="top:56.6px;text-align:right">Kasir: Helen Siregar</div><div class="dash" style="top:69.7px"></div><div class="l " style="top:70.3px;text-align:left">3 Soup Ayam +nasi +milo</div><div class="l " style="top:70.3px;text-align:right">120.000</div><div class="l " style="top:79.0px;text-align:left">1 Ayam Kremes +tahu+sambal+nasi</div><div class="l " style="top:79.0px;text-align:right">40.000</div><div class="l " style="top:87.6px;text-align:left">1 Lemon Tea Panas</div><div class="l " style="top:87.6px;text-align:right">20.000</div><div class="l" style="top:105.0px;left:4.200px;width:109px;text-align:center">Total Item: 3</div><div class="l" style="top:105.0px;left:113.200px;width:109px;text-align:center">Total Qty: 5</div><div class="l " style="top:122.2px;text-align:left">Subtotal</div><div class="l " style="top:122.2px;text-align:right">180.000</div><div class="l big" style="top:131.4px;text-align:left">Total</div><div class="l big" style="top:131.4px;text-align:right">180.000</div><div class="l " style="top:140.1px;text-align:left">Tunai</div><div class="l " style="top:140.1px;text-align:right">180.000</div><div class="dash" style="top:158.7px"></div><div class="l " style="top:162.1px;font-size:7.400px"><i>Printed on 27/3/2026, 19.50</i></div><div class="dash" style="top:176.3px"></div><div class="l " style="top:176.6px;"><b>Terima Kasih</b></div></div><div style="position:absolute;z-index:3;left:0;top:0;width:1.300px;height:640px;background:#3a2420"></div><div style="position:absolute;z-index:0;left:0;top:638.300px;width:200px;height:2px;background:#3a3a3a"></div></div></body></html>
